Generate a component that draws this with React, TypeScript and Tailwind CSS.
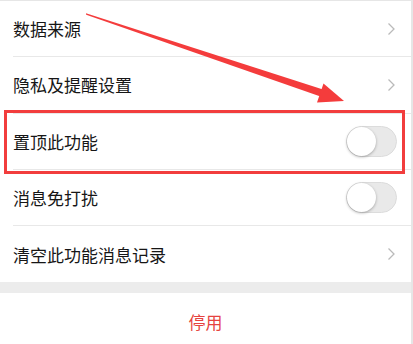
import React from "react";

type Row = { label: string; kind: "link" | "switch" };

const rows: Row[] = [
  { label: "数据来源", kind: "link" },
  { label: "隐私及提醒设置", kind: "link" },
  { label: "置顶此功能", kind: "switch" },
  { label: "消息免打扰", kind: "switch" },
  { label: "清空此功能消息记录", kind: "link" },
];

function Chevron() {
  return (
    <svg width="9" height="14" viewBox="0 0 9 14" className="mr-[1px]">
      <path d="M1.5 1.5 L7 7 L1.5 12.5" fill="none" stroke="#bababa" strokeWidth="1.3" />
    </svg>
  );
}

function Switch() {
  return (
    <div className="relative h-[31px] w-[51px] rounded-full border border-[#dcdcdc] bg-[#e9e9e9]">
      <div className="absolute left-0 top-0 h-[29px] w-[29px] rounded-full bg-white shadow-[0_1px_3px_rgba(0,0,0,0.3)]" />
    </div>
  );
}

export default function App() {
  return (
    <div
      className="relative h-[344px] w-[413px] overflow-hidden border-t border-r-2 border-[#e6e6e6] bg-white text-[#161616]"
      style={{ fontFamily: '"Noto Sans CJK SC", "Noto Sans", sans-serif' }}
    >
      <div className="flex flex-col">
        {rows.map((r, i) => (
          <div key={r.label} className="pl-[13px]">
            <div
              className={
                "flex h-[56.3px] items-center justify-between " +
                (i < rows.length - 1 ? "border-b border-[#e8e8e8]" : "")
              }
            >
              <span className="text-[17px] leading-none">{r.label}</span>
              <div className="flex items-center pr-[14px]">
                {r.kind === "link" ? <Chevron /> : <Switch />}
              </div>
            </div>
          </div>
        ))}
      </div>
      <div className="h-[11px] bg-[#ececec]" />
      <div className="flex h-[56px] items-center justify-center">
        <span className="text-[17px] leading-none text-[#e64340]">停用</span>
      </div>

      {/* annotation box */}
      <div className="pointer-events-none absolute left-[4px] top-[109px] h-[64px] w-[401px] border-[3px] border-[#f23d3d]" />

      {/* annotation arrow */}
      <svg className="pointer-events-none absolute left-0 top-0" width="413" height="344" viewBox="0 0 413 344">
        <polygon points="86,12.3 86.2,13.8 320.5,95.5 323,88.5" fill="#f43c3c" />
        <polygon points="344,100 323.5,82.5 317,101.5" fill="#f43c3c" />
      </svg>
    </div>
  );
}
